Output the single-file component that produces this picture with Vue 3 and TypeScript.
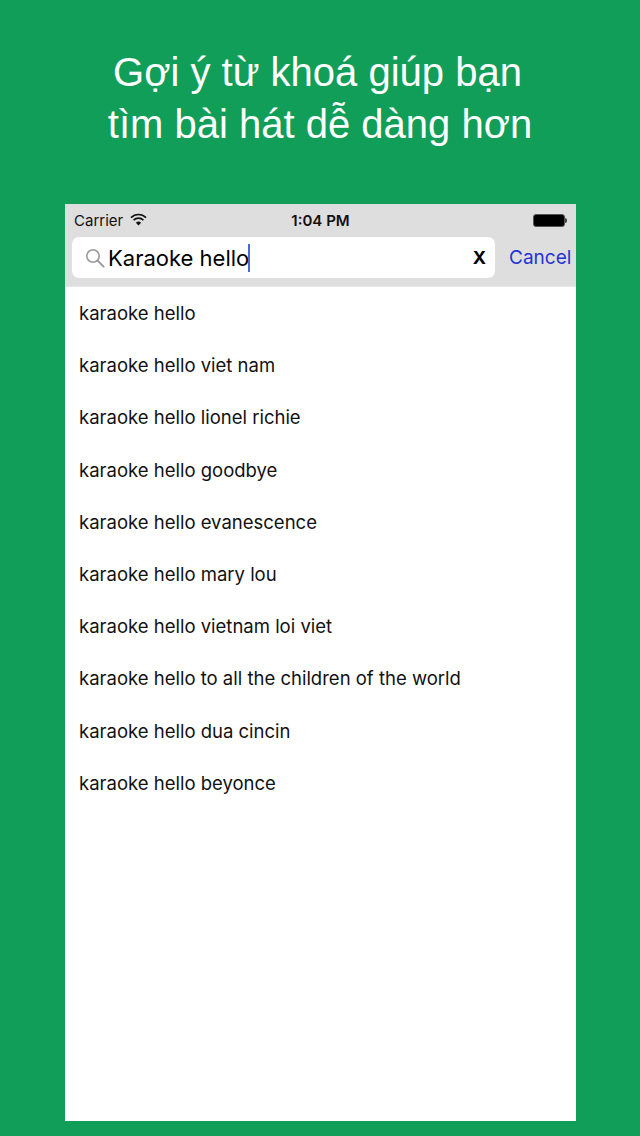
<script setup lang="ts">
const suggestions = [
  'karaoke hello',
  'karaoke hello viet nam',
  'karaoke hello lionel richie',
  'karaoke hello goodbye',
  'karaoke hello evanescence',
  'karaoke hello mary lou',
  'karaoke hello vietnam loi viet',
  'karaoke hello to all the children of the world',
  'karaoke hello dua cincin',
  'karaoke hello beyonce',
]
</script>

<template>
  <div class="page">
    <h1 class="title">
      <span class="line-one">Gợi ý từ khoá giúp bạn</span>
      <span>tìm bài hát dễ dàng hơn</span>
    </h1>

    <div class="phone">
      <div class="header">
        <div class="status">
          <div class="status-left">
            <span>Carrier</span>
            <svg class="wifi" width="17" height="13" viewBox="0 0 17 13">
              <path d="M1 4.6a10.6 10.6 0 0 1 15 0" fill="none" stroke="#111" stroke-width="1.7" />
              <path d="M3.6 7.2a7 7 0 0 1 9.8 0" fill="none" stroke="#111" stroke-width="1.7" />
              <path d="M8.5 12.4 5.9 9.7a3.7 3.7 0 0 1 5.2 0z" fill="#111" />
            </svg>
          </div>
          <span class="time">1:04 PM</span>
          <div class="battery">
            <div class="battery-body"></div>
            <div class="battery-tip"></div>
          </div>
        </div>

        <div class="search-row">
          <div class="search-box">
            <svg class="search-icon" width="20" height="20" viewBox="0 0 20 20">
              <circle cx="8" cy="8" r="6.2" fill="none" stroke="#9a9a9a" stroke-width="1.6" />
              <path d="M12.6 12.6 18.6 18.6" stroke="#9a9a9a" stroke-width="2" stroke-linecap="round" />
            </svg>
            <span class="query">Karaoke hello</span>
            <span class="caret"></span>
            <span class="clear">X</span>
          </div>
          <span class="cancel">Cancel</span>
        </div>
      </div>

      <ul class="list">
        <li v-for="item in suggestions" :key="item">{{ item }}</li>
      </ul>
    </div>
  </div>
</template>

<style>
html,
body {
  margin: 0;
  background: #119e58;
}
</style>

<style scoped>
.page {
  width: 640px;
  height: 1136px;
  background: #119e58;
  overflow: hidden;
  display: flex;
  flex-direction: column;
  font-family: Inter, "Liberation Sans", sans-serif;
}

.title {
  margin: 0;
  height: 204px;
  box-sizing: border-box;
  padding-top: 46px;
  display: flex;
  flex-direction: column;
  align-items: center;
  font-family: "Liberation Sans", Arial, sans-serif;
  font-size: 40px;
  font-weight: 400;
  line-height: 52px;
  color: #fff;
}

.line-one {
  margin-left: -5px;
}

.phone {
  width: 511px;
  height: 917px;
  margin-left: 65px;
  background: #fff;
  display: flex;
  flex-direction: column;
}

.header {
  height: 83px;
  flex: none;
  background: #dedede;
  box-sizing: border-box;
  border-bottom: 1px solid #e6e6e6;
}

.status {
  height: 33px;
  display: grid;
  grid-template-columns: 1fr auto 1fr;
  align-items: center;
  padding: 0 9px;
  font-size: 15px;
  color: #111;
}

.status-left {
  display: flex;
  align-items: center;
  gap: 7px;
}

.wifi {
  margin-top: -3px;
}

.time {
  font-weight: 600;
}

.battery {
  display: flex;
  align-items: center;
  justify-content: flex-end;
}

.battery-body {
  width: 30px;
  height: 11px;
  background: #000;
  border: 1px solid #555;
  border-radius: 3px;
}

.battery-tip {
  width: 2px;
  height: 5px;
  background: #444;
  border-radius: 0 2px 2px 0;
}

.search-row {
  display: flex;
  align-items: center;
  padding-left: 7px;
}

.search-box {
  width: 423px;
  height: 41px;
  flex: none;
  box-sizing: border-box;
  background: #fff;
  border-radius: 7px;
  display: flex;
  align-items: center;
  padding: 0 9px 0 13px;
}

.search-icon {
  flex: none;
}

.query {
  margin-left: 3px;
  font-size: 22px;
  color: #000;
}

.caret {
  width: 2px;
  height: 28px;
  margin-left: -1px;
  background: #4a68d8;
}

.clear {
  margin-left: auto;
  font-size: 18px;
  font-weight: 700;
  color: #000;
}

.cancel {
  margin-left: 14px;
  font-size: 19px;
  color: #2433d6;
}

.list {
  list-style: none;
  margin: 0;
  padding: 0;
}

.list li {
  height: 52.2px;
  line-height: 52.2px;
  padding-left: 14px;
  font-size: 18.5px;
  color: #111;
  white-space: nowrap;
}
</style>
